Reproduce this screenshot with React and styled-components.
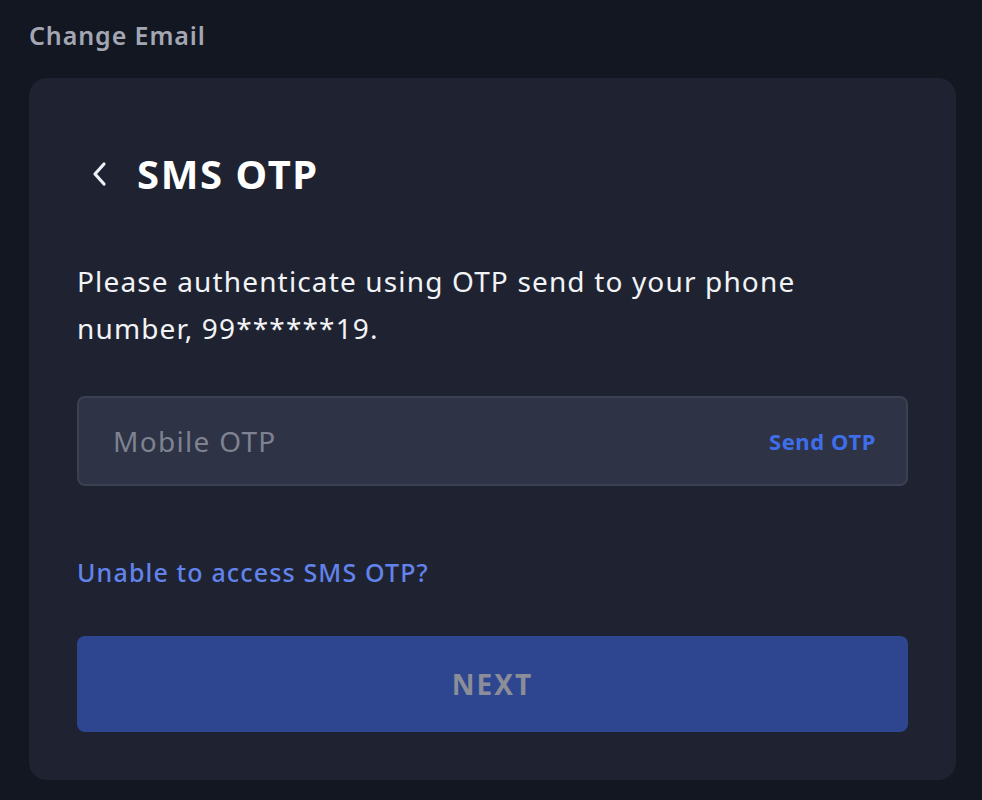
import React from "react";
import styled, { createGlobalStyle } from "styled-components";

const GlobalStyle = createGlobalStyle`
  html, body {
    margin: 0;
    padding: 0;
    background: #131722;
  }
  body {
    font-family: "Noto Sans", "Open Sans", sans-serif;
  }
`;

const Page = styled.div`
  width: 982px;
  height: 800px;
  box-sizing: border-box;
  padding: 14px 26px 0 29px;
  display: flex;
  flex-direction: column;
  gap: 22px;
`;

const PageLabel = styled.h2`
  margin: 0;
  font-size: 25px;
  font-weight: 600;
  line-height: 42px;
  letter-spacing: 0.9px;
  color: #a3a7b3;
`;

const Card = styled.section`
  background: #1f2331;
  border-radius: 18px;
  padding: 70px 48px 48px 48px;
  display: flex;
  flex-direction: column;
`;

const Header = styled.div`
  display: flex;
  align-items: center;
  gap: 28px;
  padding-left: 14px;
  margin-bottom: 58px;
`;

const BackButton = styled.button`
  background: none;
  border: none;
  padding: 0;
  display: flex;
  color: #eef0f5;
  cursor: pointer;
`;

const Title = styled.h1`
  margin: 0;
  font-size: 40px;
  font-weight: 700;
  line-height: 52px;
  letter-spacing: 1.6px;
  color: #ffffff;
`;

const Description = styled.p`
  margin: 0 0 44px 0;
  font-size: 28px;
  line-height: 47px;
  letter-spacing: 1.15px;
  color: #f2f3f6;
  max-width: 760px;
`;

const Field = styled.div`
  display: flex;
  align-items: center;
  height: 90px;
  box-sizing: border-box;
  background: #2e3346;
  border: 2px solid #3b4052;
  border-radius: 8px;
  padding: 0 30px 0 32px;
`;

const Input = styled.input`
  flex: 1;
  background: transparent;
  border: none;
  outline: none;
  font-family: inherit;
  font-size: 28px;
  letter-spacing: 1.3px;
  color: #f2f3f6;

  &::placeholder {
    color: #7e8291;
  }
`;

const SendLink = styled.button`
  background: none;
  border: none;
  padding: 0;
  font-family: inherit;
  font-size: 22px;
  font-weight: 700;
  letter-spacing: 0.6px;
  color: #3e6ee9;
  cursor: pointer;
`;

const HelpLink = styled.a`
  margin-top: 62px;
  font-size: 25px;
  font-weight: 500;
  line-height: 48px;
  letter-spacing: 1.15px;
  color: #6283ec;
  text-decoration: none;
  cursor: pointer;
`;

const NextButton = styled.button`
  margin-top: 40px;
  height: 96px;
  border: none;
  border-radius: 8px;
  background: #2e4690;
  font-family: inherit;
  font-size: 28px;
  font-weight: 700;
  letter-spacing: 2px;
  color: #8b8e99;
  cursor: not-allowed;
`;

const ChevronLeft = () => (
  <svg width="18" height="26" viewBox="0 0 18 26" fill="none">
    <path
      d="M13 3 L4 13 L13 23"
      stroke="currentColor"
      strokeWidth="3.2"
      strokeLinecap="round"
      strokeLinejoin="round"
    />
  </svg>
);

export default function App() {
  return (
    <>
      <GlobalStyle />
      <Page>
        <PageLabel>Change Email</PageLabel>
        <Card>
          <Header>
            <BackButton aria-label="Back">
              <ChevronLeft />
            </BackButton>
            <Title>SMS OTP</Title>
          </Header>
          <Description>
            Please authenticate using OTP send to your phone number, 99******19.
          </Description>
          <Field>
            <Input placeholder="Mobile OTP" />
            <SendLink>Send OTP</SendLink>
          </Field>
          <HelpLink>Unable to access SMS OTP?</HelpLink>
          <NextButton disabled>NEXT</NextButton>
        </Card>
      </Page>
    </>
  );
}
